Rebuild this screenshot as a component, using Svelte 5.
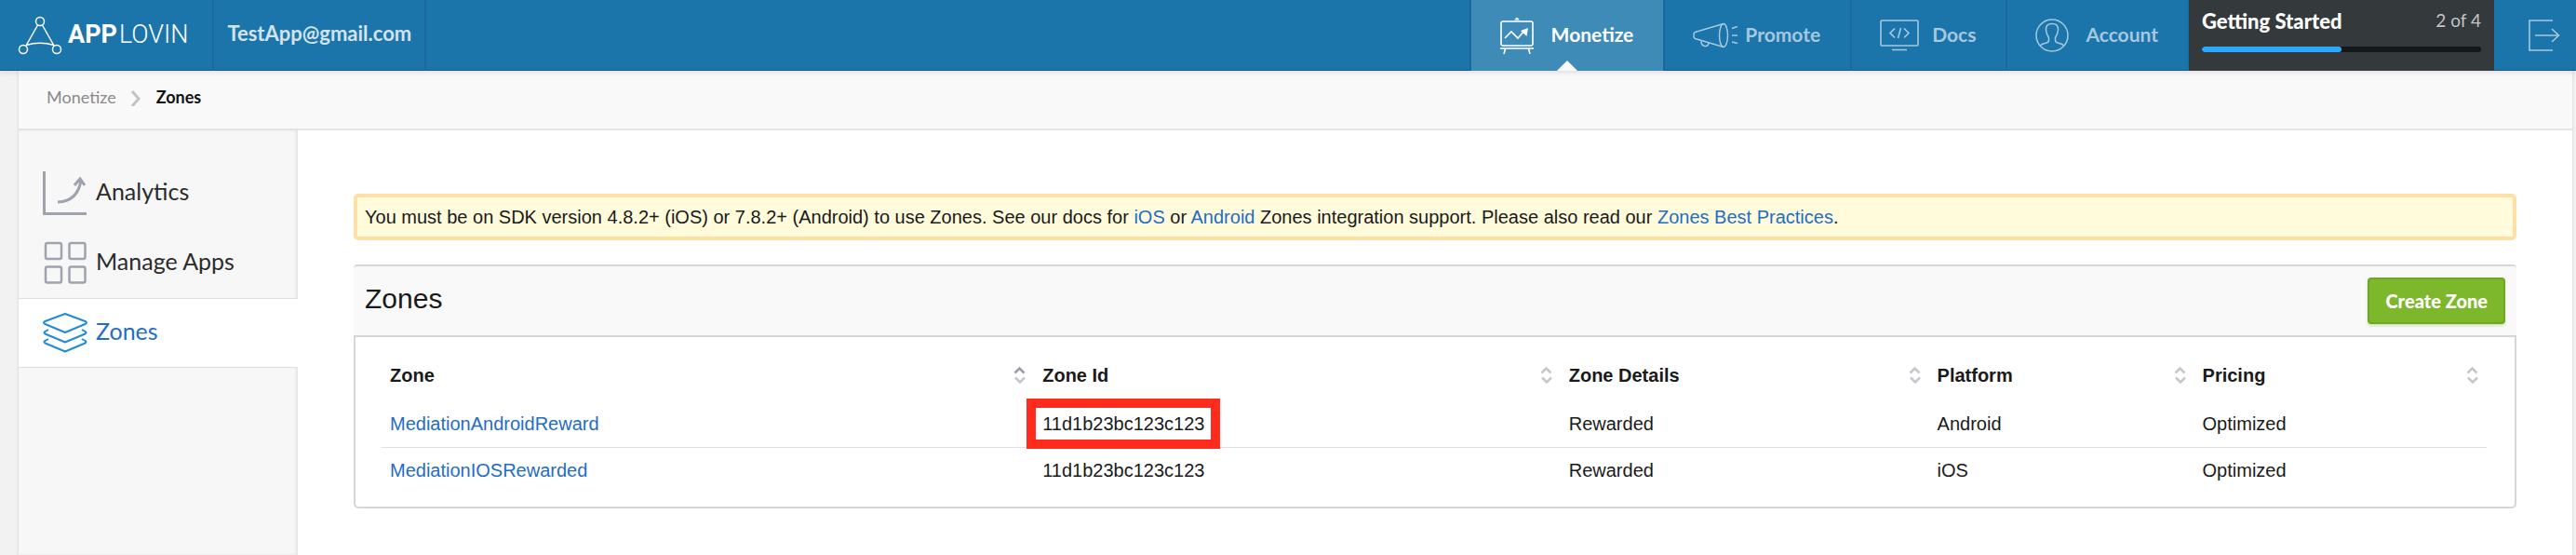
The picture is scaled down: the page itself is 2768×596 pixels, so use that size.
<script>
  const rows = [
    { name: 'MediationAndroidReward', id: '11d1b23bc123c123', details: 'Rewarded', platform: 'Android', pricing: 'Optimized', marked: true },
    { name: 'MediationIOSRewarded', id: '11d1b23bc123c123', details: 'Rewarded', platform: 'iOS', pricing: 'Optimized', marked: false }
  ];
  const columns = [
    { label: 'Zone', width: 31, sorted: true },
    { label: 'Zone Id', width: 25 },
    { label: 'Zone Details', width: 17.5 },
    { label: 'Platform', width: 12.6 },
    { label: 'Pricing', width: 13.9 }
  ];
  const step = 2;
  const steps = 4;
</script>

<div class="page">
  <header class="topbar">
    <a class="logo" href="#home">
      <svg width="48" height="42" viewBox="0 0 48 42" fill="none" stroke="#fff" stroke-width="1.5">
        <circle cx="24" cy="6" r="4.5" />
        <circle cx="6" cy="36" r="4.5" />
        <circle cx="42" cy="36" r="4.5" />
        <path d="M21.5 10 9 32M26.5 10 39 32M9 31.500Q24 27 39 31.500" />
      </svg>
      <span class="wordmark"><b>APP</b>LOVIN</span>
    </a>
    <a class="user" href="#user">TestApp@gmail.com</a>
    <nav class="main-nav">
      <a class="nav-item monetize active" href="#monetize" aria-current="page">
        <svg width="38" height="40" viewBox="0 0 38 40" fill="none" stroke="currentColor" stroke-width="1.6">
          <rect x="2" y="5" width="34" height="26" rx="2" />
          <path d="M1 34H37M6.500 34.500 5 40M31.500 34.500 33 40" />
          <path d="M6 23l7-7 7 7 7-8" />
          <path d="M31 12l-1.500 9-6.500-6z" fill="currentColor" stroke="none" />
          <path d="M19 0.500l3 3h-6z" fill="currentColor" stroke="none" />
        </svg>
        <span>Monetize</span>
      </a>
      <a class="nav-item promote" href="#promote">
        <svg width="50" height="28" viewBox="0 0 50 28" fill="none" stroke="currentColor" stroke-width="1.500">
          <ellipse cx="33" cy="14" rx="4.500" ry="12.500" />
          <path d="M33 1.500 2.500 10.500Q1 11 1 14T2.500 17.500L33 26.500M9 20q0 5 4 5.500 3.500.5 4-3.500M42 6.500l6-2M42 14h6M42 21l6 1.500" />
        </svg>
        <span>Promote</span>
      </a>
      <a class="nav-item docs" href="#docs">
        <svg width="42" height="34" viewBox="0 0 42 34" fill="none" stroke="currentColor" stroke-width="1.600">
          <rect x="1" y="1" width="40" height="27" rx="1" />
          <path d="M13 32.500h16M16 9.500l-5 5 5 5M26 9.500l5 5-5 5M22.500 9l-3 11" />
        </svg>
        <span>Docs</span>
      </a>
      <a class="nav-item account" href="#account">
        <svg width="36" height="36" viewBox="0 0 36 36" fill="none" stroke="currentColor" stroke-width="1.500">
          <circle cx="18" cy="18" r="17" />
          <path d="M5 29q2-2 7-3 2.500-.5 2.500-3v-2.500Q12 17 11.500 12 11 5.500 18 5.500T24.500 12Q24 17 21.500 20.500V23q0 2.500 2.500 3 5 1 7 3" />
        </svg>
        <span>Account</span>
      </a>
    </nav>
    <section class="progress">
      <div class="progress-head">
        <strong>Getting Started</strong>
        <span>{step} of {steps}</span>
      </div>
      <div class="track"><div class="fill" style="width: {(step / steps) * 100}%"></div></div>
    </section>
    <a class="logout" href="#logout" aria-label="Log out">
      <svg width="34" height="34" viewBox="0 0 34 34" fill="none" stroke="currentColor" stroke-width="1.600">
        <path d="M26 1H1v32h25M7 17h25M25 10l7.500 7-7.500 7" />
      </svg>
    </a>
  </header>

  <div class="frame">
    <nav class="crumbs" aria-label="Breadcrumb">
      <a href="#monetize">Monetize</a>
      <svg width="13" height="20" viewBox="0 0 13 20" fill="none" stroke="#c4c4c4" stroke-width="3">
        <path d="M2 4l7 8-7 8" />
      </svg>
      <span>Zones</span>
    </nav>

    <div class="columns">
      <aside class="sidebar">
        <a class="side-item" href="#analytics">
          <svg width="48" height="48" viewBox="0 0 48 48" fill="none" stroke="#9fa3ad" stroke-width="3">
            <path d="M1.500 0V45.500H47M16 33Q38 32 41 9M34 15l6-7 5 7" />
          </svg>
          <span>Analytics</span>
        </a>
        <a class="side-item" href="#apps">
          <svg width="48" height="48" viewBox="0 0 48 48" fill="none" stroke="#9fa3ad" stroke-width="2.500">
            <rect x="3" y="2" width="17" height="17" rx="2" />
            <rect x="28.500" y="2" width="17" height="17" rx="2" />
            <rect x="3" y="27.500" width="17" height="17" rx="2" />
            <rect x="28.500" y="27.500" width="17" height="17" rx="2" />
          </svg>
          <span>Manage Apps</span>
        </a>
        <a class="side-item current" href="#zones" aria-current="page">
          <svg width="48" height="48" viewBox="0 0 48 48" fill="none" stroke="#1f8dd6" stroke-width="2" stroke-linejoin="round">
            <path d="M24 3 45.500 11q3 1.500 0 3L24 23 2.500 14q-3-1.500 0-3z" />
            <path d="M6 20l-3.500 2q-2 1 0 2.500L24 33.500 45.500 24.500q2-1.500 0-2.500L42 20" />
            <path d="M6 30l-3.500 2q-2 1 0 2.500L24 43.500 45.500 34.500q2-1.500 0-2.500L42 30" />
          </svg>
          <span>Zones</span>
        </a>
      </aside>

      <main class="content">
        <p class="notice">
          You must be on SDK version 4.8.2+ (iOS) or 7.8.2+ (Android) to use Zones. See our docs for <a href="#ios">iOS</a> or <a href="#android">Android</a> Zones integration support. Please also read our <a href="#practices">Zones Best Practices</a>.
        </p>

        <section class="panel">
          <div class="panel-head">
            <h1>Zones</h1>
            <button type="button">Create Zone</button>
          </div>
          <div class="panel-body">
            <table>
              <colgroup>
                {#each columns as column}
                  <col style="width: {column.width}%" />
                {/each}
              </colgroup>
              <thead>
                <tr>
                  {#each columns as column}
                    <th scope="col">
                      <div class="th">
                        <span>{column.label}</span>
                        <svg width="14" height="20" viewBox="0 0 14 20" fill="none" stroke="#c6c7cd" stroke-width="2.500">
                          <path d="M1.500 7.500 6.500 2.500l5 5" stroke={column.sorted ? '#979ca6' : '#c6c7cd'} />
                          <path d="M2 12.500l5 5 5-5" />
                        </svg>
                      </div>
                    </th>
                  {/each}
                </tr>
              </thead>
              <tbody>
                {#each rows as row}
                  <tr>
                    <td><a href="#zone">{row.name}</a></td>
                    <td><span class:marked={row.marked}>{row.id}</span></td>
                    <td>{row.details}</td>
                    <td>{row.platform}</td>
                    <td>{row.pricing}</td>
                  </tr>
                {/each}
              </tbody>
            </table>
          </div>
        </section>
      </main>
    </div>
  </div>
</div>

<style>
  :global(body) {
    background: #f2f2f2;
  }
  .page {
    display: flex;
    flex-direction: column;
    min-height: 100vh;
    color: #1a1a1a;
    font: 20px/24px "Liberation Sans", Arial, sans-serif;
  }
  .page * {
    box-sizing: border-box;
  }
  a {
    color: #1f6dc4;
    text-decoration: none;
  }
  svg {
    display: block;
    flex: none;
  }

  .topbar {
    position: relative;
    display: flex;
    height: 76px;
    background: #1c75aa;
    box-shadow: inset 0 -1px #17598a, 0 1px 6px rgba(60, 30, 60, 0.16);
    font-family: Lato, sans-serif;
    font-size: 22px;
    font-weight: 700;
  }
  .topbar a {
    display: flex;
    align-items: center;
    color: #a4c8de;
  }
  .topbar .logo {
    gap: 6px;
    padding: 0 26px 0 19px;
    border-right: 2px solid #19699a;
    color: #fff;
  }
  .wordmark {
    padding-bottom: 2px;
    font-family: Roboto, sans-serif;
    font-size: 27px;
    font-weight: 300;
  }
  .wordmark b {
    font-weight: 700;
    margin-right: 2px;
  }
  .topbar .user {
    padding: 0 14px 4px;
    border-right: 2px solid #19699a;
    color: #d2e3ee;
  }
  .main-nav {
    display: flex;
    margin-left: auto;
    font-size: 21px;
  }
  .topbar .nav-item {
    position: relative;
    padding: 0 32px 0 30px;
    border-left: 2px solid #19699a;
  }
  .nav-item span {
    padding-bottom: 3px;
  }
  .monetize,
  .account {
    gap: 18px;
  }
  .promote {
    gap: 6px;
  }
  .docs {
    gap: 14px;
  }
  .topbar .active {
    background: #3f8bb7;
    color: #fff;
  }
  .active::after {
    content: "";
    position: absolute;
    left: 50%;
    bottom: 0;
    margin-left: -11px;
    border: 11px solid transparent;
    border-top: 0;
    border-bottom-color: #f9f9f9;
  }
  .progress {
    width: 329px;
    padding: 10px 14px;
    background: #34393c;
    border-left: 1px solid #19699a;
  }
  .progress-head {
    display: flex;
    justify-content: space-between;
    color: #fff;
    line-height: 26px;
  }
  .progress-head span {
    color: #c2c4c5;
    font-size: 19px;
    font-weight: 400;
    line-height: 24px;
  }
  .track {
    height: 6px;
    margin-top: 14px;
    border-radius: 3px;
    background: #14181a;
    overflow: hidden;
  }
  .fill {
    height: 100%;
    border-radius: 3px;
    background: #29aaff;
  }
  .logout {
    padding: 0 17px 0 37px;
  }

  .frame {
    flex: 1;
    display: flex;
    flex-direction: column;
    margin: 0 4px 0 20px;
    background: #fff;
    box-shadow: 0 0 3px rgba(0, 0, 0, 0.15);
  }
  .crumbs {
    display: flex;
    align-items: center;
    gap: 15px;
    height: 64px;
    padding: 0 30px 6px;
    border-bottom: 2px solid #e4e4e4;
    background: #f9f9f9;
    font-family: Lato, sans-serif;
    font-size: 18px;
    color: #111;
  }
  .crumbs a {
    color: #8a8a8a;
  }
  .crumbs span {
    font-weight: 700;
  }
  .columns {
    flex: 1;
    display: flex;
  }
  .sidebar {
    flex: none;
    width: 300px;
    padding-top: 30px;
    background: #f7f7f7;
    box-shadow: inset -2px 0 3px rgba(0, 0, 0, 0.08);
  }
  .side-item {
    display: flex;
    align-items: center;
    gap: 9px;
    height: 75px;
    padding: 0 26px;
    color: #2b2b2b;
    font-family: Lato, sans-serif;
    font-size: 25px;
  }
  .side-item span {
    padding-bottom: 5px;
  }
  .current {
    background: #fff;
    border-top: 1px solid #e0e0e0;
    border-bottom: 1px solid #e0e0e0;
    color: #1f6dc4;
  }

  .content {
    flex: 1;
    min-width: 0;
    padding: 68px 60px 48px;
  }
  .notice {
    margin: 0 0 26px;
    padding: 9px 8px;
    border: 4px solid #fde0a8;
    border-radius: 5px;
    background: #fffbdb;
  }
  .panel-head {
    display: flex;
    align-items: center;
    justify-content: space-between;
    height: 76px;
    padding: 0 12px;
    border-top: 2px solid #d6d6d6;
    border-radius: 4px 4px 0 0;
    background: #f9f9f9;
  }
  h1 {
    margin: 0;
    padding-bottom: 4px;
    font: 400 30px/36px "Liberation Sans", Arial, sans-serif;
  }
  button {
    height: 50px;
    padding: 0 17px;
    border: 2px solid #71a524;
    border-radius: 4px;
    background: #7db72b;
    box-shadow: 0 2px 3px rgba(125, 183, 43, 0.3);
    color: #fff;
    font: 900 20px/24px Lato, sans-serif;
  }
  .panel-body {
    padding: 14px 30px 14px 28px;
    border: 2px solid #d6d6d6;
    border-radius: 0 0 5px 5px;
  }
  table {
    width: 100%;
    border-collapse: collapse;
    table-layout: fixed;
  }
  th,
  td {
    height: 50px;
    padding: 0 8px 0 9px;
    text-align: left;
  }
  th {
    height: 54px;
  }
  .th {
    display: flex;
    align-items: center;
    justify-content: space-between;
  }
  tbody tr + tr td {
    box-shadow: inset 0 1px #e0e0e0;
  }
  .marked {
    position: relative;
  }
  .marked::after {
    content: "";
    position: absolute;
    inset: -16px -17px;
    border: 10px solid #ff2b1d;
  }
</style>
